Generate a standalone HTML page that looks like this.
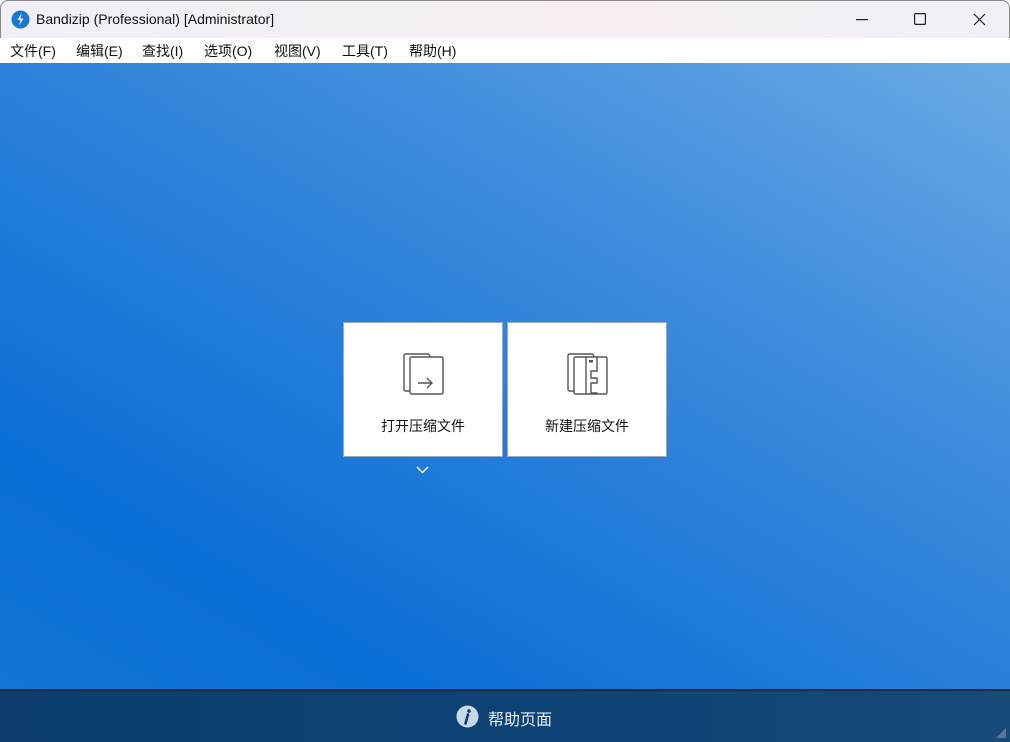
<!DOCTYPE html>
<html><head><meta charset="utf-8"><style>
*{margin:0;padding:0;box-sizing:border-box}
body{width:1010px;height:742px;overflow:hidden;font-family:"Segoe UI","Liberation Sans","Noto Sans CJK SC",sans-serif;background:#fff;position:relative}
.title{position:absolute;left:0;top:0;width:1010px;height:38px;background:linear-gradient(90deg,#f1eff6,#f6eef4 60%,#f1eff6);border:1px solid #888;border-bottom:none;border-radius:8px 8px 0 0}
.title .t{position:absolute;left:35px;top:10px;font-size:14px;color:#111}
.menu{position:absolute;left:0;top:38px;width:1010px;height:25px;background:#fff;font-size:14px;color:#111}
.menu span{position:absolute;top:3px}
.main{position:absolute;left:0;top:63px;width:1010px;height:627px;background:linear-gradient(210deg,#68aae4 0%,#4590de 28%,#2a80da 50%,#0a6fd6 80%,#1276d6 100%)}
.card{position:absolute;top:322px;width:160px;height:135px;background:#fff;border:1px solid #9ab}
.card .l{position:absolute;left:0;width:100%;top:93px;text-align:center;font-size:14px;color:#111}
.card svg{position:absolute;left:58px;top:27px}
.foot{position:absolute;left:0;top:689px;width:1010px;height:53px;background:linear-gradient(90deg,#0c3d6e,#0f4275 60%,#184a78);border-top:2px solid #1c2b3a}
.foot .t{position:absolute;left:488px;top:15px;color:#e8eef5;font-size:16px}
</style></head><body>
<div class="title">
<svg style="position:absolute;left:10px;top:9px" width="19" height="19" viewBox="0 0 19 19"><circle cx="9.5" cy="9.5" r="9" fill="#1a78d2"/><path d="M10.5 3.5 L6.5 10 H9.5 L8 15.5 L12.5 8.5 H9.5 Z" fill="#fff"/></svg>
<span class="t">Bandizip (Professional) [Administrator]</span>
<svg style="position:absolute;left:855px;top:18px" width="12" height="2"><rect width="12" height="1.2" fill="#222"/></svg>
<svg style="position:absolute;left:913px;top:12px" width="12" height="12"><rect x=".6" y=".6" width="10.8" height="10.8" fill="none" stroke="#222" stroke-width="1.2" rx="1"/></svg>
<svg style="position:absolute;left:972px;top:12px" width="13" height="13"><path d="M1 1L12 12M12 1L1 12" stroke="#222" stroke-width="1.2"/></svg>
</div>
<div class="menu">
<span style="left:10px">文件(F)</span><span style="left:76px">编辑(E)</span><span style="left:142px">查找(I)</span><span style="left:204px">选项(O)</span><span style="left:274px">视图(V)</span><span style="left:342px">工具(T)</span><span style="left:409px">帮助(H)</span>
</div>
<div class="main"></div>
<div class="card" style="left:343px">
<svg width="44" height="46" viewBox="0 0 44 46"><path d="M8 41H3.5a1.5 1.5 0 0 1-1.5-1.5V5.5A1.5 1.5 0 0 1 3.5 4H26a1.5 1.5 0 0 1 1.5 1.5V7" fill="none" stroke="#555" stroke-width="1.4"/><rect x="8" y="7" width="33" height="37" rx="1.5" fill="#fff" stroke="#555" stroke-width="1.4"/><path d="M16 33H30M25 28L30 33L25 38" fill="none" stroke="#555" stroke-width="1.4"/></svg>
<div class="l">打开压缩文件</div></div>
<div class="card" style="left:507px">
<svg width="44" height="46" viewBox="0 0 44 46"><path d="M8 41H3.5a1.5 1.5 0 0 1-1.5-1.5V5.5A1.5 1.5 0 0 1 3.5 4H26a1.5 1.5 0 0 1 1.5 1.5V7" fill="none" stroke="#555" stroke-width="1.4"/><rect x="8" y="7" width="33" height="37" rx="1.5" fill="#fff" stroke="#555" stroke-width="1.4"/><path d="M20 7V44M31 7V21H25V28H31V33H25V43H31V44" fill="none" stroke="#555" stroke-width="1.4"/><rect x="23" y="10" width="4" height="2.5" fill="#555"/></svg>
<div class="l">新建压缩文件</div></div>
<svg style="position:absolute;left:416px;top:466px" width="13" height="8"><path d="M1 1L6.5 6.5L12 1" fill="none" stroke="#fff" stroke-width="1.4"/></svg>
<div class="foot">
<svg style="position:absolute;left:456px;top:14px" width="23" height="23" viewBox="0 0 23 23"><circle cx="11.5" cy="11.5" r="11" fill="#c8d8e8"/><circle cx="13" cy="6" r="1.8" fill="#0e3f6e"/><path d="M12 9.5L9.5 18.5" stroke="#0e3f6e" stroke-width="2.6" stroke-linecap="round"/></svg>
<span class="t">帮助页面</span>
<svg style="position:absolute;left:995px;top:36px" width="12" height="12"><path d="M11 1V11H1Z" fill="#5a7896"/></svg>
</div>
</body></html>
